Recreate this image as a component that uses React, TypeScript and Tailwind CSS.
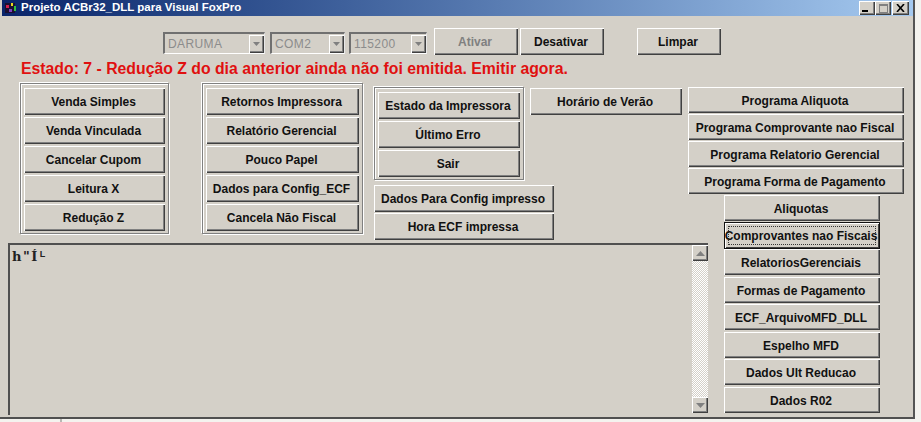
import React from "react";

const bevel = "shadow-[inset_1px_1px_0_#ffffff,inset_-1px_-1px_0_#404040,inset_-2px_-2px_0_#808080]";

function Btn({ label, className = "", focus = false, disabled = false, low = false }: { label: string; className?: string; focus?: boolean; disabled?: boolean; low?: boolean }) {
  return (
    <div className={`relative flex items-center justify-center shrink-0 bg-[#d4d0c8] text-[12px] leading-none font-bold whitespace-nowrap ${focus ? "border border-[#111111] shadow-[inset_1px_1px_0_#ffffff,inset_-1px_-1px_0_#404040]" : bevel} ${disabled ? "text-[#808080]" : "text-[#111111]"} ${className}`}>
      {focus && <div className="absolute inset-[3px] border border-dotted border-[#333333]" />}
      <span className={`relative left-[-1px] ${low ? "top-[1px]" : "top-0"}`}>{label}</span>
    </div>
  );
}

function Combo({ label, className }: { label: string; className: string }) {
  return (
    <div className={`flex items-center h-[22px] mt-[4px] bg-[#d4d0c8] border-l-2 border-t-2 border-[#707070] border-r border-b border-r-[#e8e8e8] border-b-[#ffffff] ${className}`}>
      <span className="flex-1 pl-[3px] text-[12px] text-[#8c8c8c] tracking-[0.4px]">{label}</span>
      <div className={`w-[15px] h-[18px] flex items-center justify-center ${bevel}`}>
        <svg width="7" height="4" viewBox="0 0 7 4"><path d="M0 0h7L3.5 4z" fill="#808080" /></svg>
      </div>
    </div>
  );
}

function Group({ className, children }: { className: string; children: React.ReactNode }) {
  return (
    <div className={`flex flex-col border border-[#808080] shadow-[inset_1px_1px_0_#ffffff,1px_1px_0_#ffffff,-1px_-1px_0_#ffffff] ${className}`}>
      {children}
    </div>
  );
}

function ScrollBtn({ up }: { up?: boolean }) {
  return (
    <div className={`w-[16px] h-[16px] shrink-0 bg-[#d4d0c8] flex items-center justify-center ${bevel}`}>
      <svg width="9" height="5" viewBox="0 0 9 5">
        <path d={up ? "M0 5h9L4.5 0z" : "M0 0h9L4.5 5z"} fill="#808080" />
      </svg>
    </div>
  );
}

export default function App() {
  return (
    <div className="w-[921px] h-[422px] bg-[#f4f3ef] overflow-hidden font-['Liberation_Sans',Arial,sans-serif]">
      <div className="w-[915px] h-[419px] bg-[#d4d0c8] border-r-2 border-b-2 border-r-[#555555] border-b-[#505050] flex flex-col">
        <div className="ml-[2px] h-[16px] shrink-0 bg-gradient-to-r from-[#0a246a] to-[#a6caf0] flex items-center pr-[4px]">
          <svg width="16" height="14" viewBox="0 0 16 14" className="mr-[3px] shrink-0">
            <rect x="3" y="2" width="10" height="10" fill="#1b1030" />
            <rect x="4" y="4" width="3" height="3" fill="#d02050" />
            <rect x="9" y="2" width="2" height="3" fill="#e8d820" />
            <rect x="12" y="5" width="2" height="5" fill="#30c040" />
            <rect x="7" y="8" width="3" height="3" fill="#8040c0" />
          </svg>
          <span className="text-[11.5px] font-bold text-white whitespace-nowrap">Projeto ACBr32_DLL para Visual FoxPro</span>
          <div className="ml-auto flex">
            <div className={`w-[16px] h-[14px] bg-[#d4d0c8] flex items-end pl-[3px] pb-[3px] ${bevel}`}><div className="w-[6px] h-[2px] bg-black" /></div>
            <div className={`w-[16px] h-[14px] bg-[#d4d0c8] flex items-center justify-center ${bevel}`}><div className="w-[9px] h-[9px] border border-[#808080] border-t-2" /></div>
            <div className={`w-[17px] h-[14px] ml-[1px] bg-[#d4d0c8] flex items-center justify-center ${bevel}`}>
              <svg width="9" height="8" viewBox="0 0 9 8"><path d="M1 0l7 8M8 0L1 8" stroke="#000" strokeWidth="1.6" /></svg>
            </div>
          </div>
        </div>

        <div className="flex items-start mt-[12px] ml-[163px] h-[27px]">
          <Combo label="DARUMA" className="w-[102px]" />
          <Combo label="COM2" className="w-[75px] ml-[5px]" />
          <Combo label="115200" className="w-[78px] ml-[4px]" />
          <Btn label="Ativar" disabled className="w-[84px] h-[27px] ml-[7px]" />
          <Btn label="Desativar" className="w-[84px] h-[27px] ml-[2px]" />
          <Btn label="Limpar" className="w-[84px] h-[27px] ml-[33px]" />
        </div>

        <div className="mt-[4px] ml-[21px] h-[20px] text-[15.8px] leading-[20px] font-bold text-[#e01010] whitespace-nowrap">
          Estado: 7 - Redução Z do dia anterior ainda não foi emitida. Emitir agora.
        </div>

        <div className="flex items-start mt-[4px] ml-[8px]">
          <div className="w-[680px] shrink-0 flex flex-col">
            <div className="flex items-start h-[160px] pl-[12px]">
              <Group className="w-[149px] h-[151px] pl-[3px] pt-[4px] gap-[2px]">
                <Btn label="Venda Simples" className="w-[141px] h-[27px]" />
                <Btn label="Venda Vinculada" className="w-[141px] h-[27px]" />
                <Btn label="Cancelar Cupom" className="w-[141px] h-[27px]" />
                <Btn label="Leitura X" className="w-[141px] h-[27px]" />
                <Btn label="Redução Z" className="w-[141px] h-[27px]" />
              </Group>
              <Group className="w-[161px] h-[151px] ml-[33px] pl-[3px] pt-[4px] gap-[2px]">
                <Btn label="Retornos Impressora" className="w-[153px] h-[27px]" />
                <Btn label="Relatório Gerencial" className="w-[153px] h-[27px]" />
                <Btn label="Pouco Papel" className="w-[153px] h-[27px]" />
                <Btn label="Dados para Config_ECF" className="w-[153px] h-[27px]" />
                <Btn label="Cancela Não Fiscal" className="w-[153px] h-[27px]" />
              </Group>
              <div className="ml-[11px] flex flex-col">
                <div className="flex items-start">
                  <Group className="w-[150px] h-[93px] mt-[4px] pl-[3px] pt-[4px] gap-[2px]">
                    <Btn label="Estado da Impressora" className="w-[142px] h-[27px]" />
                    <Btn label="Último Erro" className="w-[142px] h-[27px]" />
                    <Btn label="Sair" className="w-[142px] h-[27px]" />
                  </Group>
                  <Btn label="Horário de Verão" className="w-[152px] h-[27px] ml-[6px] mt-[5px]" />
                </div>
                <Btn label="Dados Para Config impresso" className="w-[180px] h-[27px] mt-[5px]" />
                <Btn label="Hora ECF impressa" className="w-[180px] h-[27px] mt-[1px]" />
              </div>
            </div>
            <div className="w-[700px] h-[172px] shrink-0 border-l-2 border-t-2 border-[#505050] flex">
              <div className="flex-1 pl-[2px] pt-[2px] font-['DejaVu_Serif',serif] font-bold text-[13px] leading-[15px] text-[#222222] tracking-[1.5px]">
                h"Í<span className="font-['Liberation_Sans',sans-serif] text-[9px] align-[4px] ml-[1px]">L</span>
              </div>
              <div className="w-[16px] flex flex-col bg-[repeating-conic-gradient(#ffffff_0_25%,#d4d0c8_0_50%)] bg-[length:2px_2px] h-[168px]">
                <ScrollBtn up />
                <div className="flex-1" />
                <ScrollBtn />
              </div>
            </div>
          </div>

          <div className="flex flex-col mt-[4px]">
            <Btn low label="Programa Aliquota" className="w-[216px] h-[26px]" />
            <Btn low label="Programa Comprovante nao Fiscal" className="w-[216px] h-[26px] mt-[1px]" />
            <Btn low label="Programa Relatorio Gerencial" className="w-[216px] h-[26px] mt-[1px]" />
            <Btn low label="Programa Forma de Pagamento" className="w-[216px] h-[26px] mt-[1px]" />
            <div className="flex flex-col ml-[36px] mt-[1px]">
              <Btn low label="Aliquotas" className="w-[156px] h-[26px]" />
              <Btn label="Comprovantes nao Fiscais" focus className="w-[156px] h-[27px] mt-[1px]" />
              <Btn low label="RelatoriosGerenciais" className="w-[156px] h-[26px]" />
              <Btn low label="Formas de Pagamento" className="w-[156px] h-[26px] mt-[2px]" />
              <Btn low label="ECF_ArquivoMFD_DLL" className="w-[156px] h-[26px] mt-[1px]" />
              <Btn low label="Espelho MFD" className="w-[156px] h-[26px] mt-[2px]" />
              <Btn low label="Dados Ult Reducao" className="w-[156px] h-[26px] mt-[1px]" />
              <Btn low label="Dados R02" className="w-[156px] h-[26px] mt-[2px]" />
            </div>
          </div>
        </div>
      </div>
      <div className="ml-[60px] w-[2px] h-[3px] bg-[#b8b8b4]" />
    </div>
  );
}
